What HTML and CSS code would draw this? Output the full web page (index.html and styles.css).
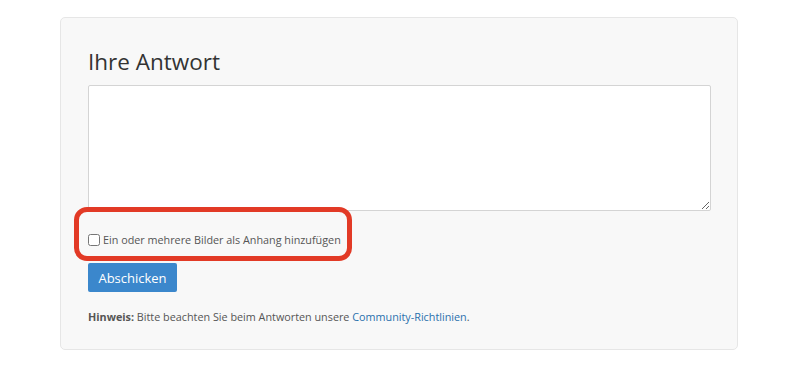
FILE: index.html
```html
<!DOCTYPE html>
<html lang="de">
<head>
    <meta charset="UTF-8">
    <meta name="viewport" content="width=device-width, initial-scale=1.0">
    <title>Ihre Antwort</title>
    <link rel="stylesheet" href="styles.css">
</head>
<body>
    <div class="answer-card">
        <h2 class="answer-title">Ihre Antwort</h2>
        <textarea class="answer-text"></textarea>
        <div class="attach-row">
            <label class="attach-label">
                <input type="checkbox" class="attach-check">
                <span>Ein oder mehrere Bilder als Anhang hinzufügen</span>
            </label>
            <div class="highlight-box"></div>
        </div>
        <button class="submit-btn">Abschicken</button>
        <p class="hint"><strong>Hinweis:</strong> Bitte beachten Sie beim Antworten unsere <a href="#">Community-Richtlinien</a>.</p>
    </div>
</body>
</html>
```

FILE: styles.css
```css
body {
    margin: 0;
    padding: 17px 0 0 60px;
    background: #ffffff;
    font-family: "Open Sans", Arial, sans-serif;
    color: #333;
}

.answer-card {
    width: 623px;
    padding: 0 26px 24px 27px;
    background: #f8f8f8;
    border: 1px solid #e6e6e6;
    border-radius: 5px;
}

.answer-title {
    margin: 0;
    padding-top: 29px;
    font-size: 22.5px;
    font-weight: 400;
    line-height: 30px;
    color: #333;
}

.answer-text {
    display: block;
    width: 100%;
    height: 126px;
    margin-top: 8px;
    box-sizing: border-box;
    background: #fff;
    border: 1px solid #d4d4d4;
    border-radius: 2px;
    resize: vertical;
}

.attach-row {
    position: relative;
    margin-top: 21px;
    height: 16px;
}

.attach-label {
    display: flex;
    align-items: center;
    gap: 3px;
    font-size: 10.8px;
    color: #555;
}

.attach-check {
    margin: 0;
    width: 12px;
    height: 12px;
}

.highlight-box {
    position: absolute;
    left: -14px;
    top: -25px;
    width: 268px;
    height: 44px;
    border: 5px solid #e23a26;
    border-radius: 13px;
    pointer-events: none;
}

.submit-btn {
    display: block;
    margin-top: 15px;
    width: 89px;
    height: 29px;
    background: #3b87cc;
    color: #fff;
    border: none;
    border-radius: 2px;
    font-family: inherit;
    font-size: 13px;
}

.hint {
    margin: 17px 0 0;
    font-size: 10.8px;
    line-height: 16px;
    color: #555;
}

.hint a {
    color: #2a70ad;
    text-decoration: none;
}
```
